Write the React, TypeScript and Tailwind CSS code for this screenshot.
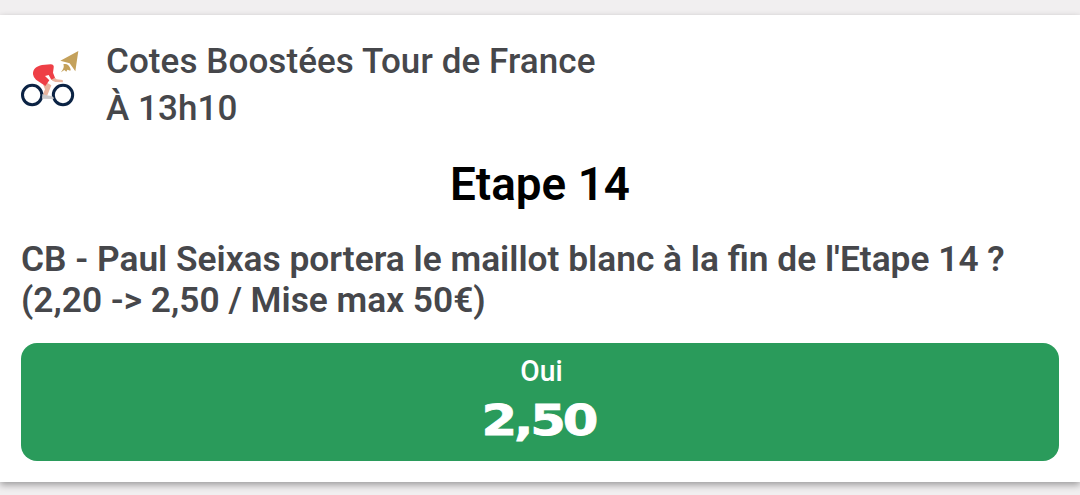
import React from 'react';

const market = {
	title: 'Cotes Boostées Tour de France',
	time: 'À 13h10',
	stage: 'Etape 14',
	question: ["CB - Paul Seixas portera le maillot blanc à la fin de l'Etape 14 ?", '(2,20 -> 2,50 / Mise max 50€)'],
	outcome: { label: 'Oui', odds: '2,50' },
};

const CyclingIcon: React.FC = () => (
	<svg viewBox="30 27 180 180" className="h-[60px] w-[60px] shrink-0" aria-hidden="true">
		{/* leg */}
		<path d="M107 126L124 136L118 151L111 169L97 168L105 148L100 136Z" fill="#e9b49f" />
		<g fill="none" stroke="#0b2344" strokeWidth="9">
			<circle cx="66.5" cy="165" r="29" />
			<circle cx="159" cy="165" r="29" />
		</g>
		{/* shoe */}
		<path d="M97 162L110 166L124 168Q132 170 131 177L96 176Z" fill="#c9c8ca" />
		{/* arm */}
		<path d="M122 114L133 112L140 118L158 120L159 127L136 126L127 122Z" fill="#e9b49f" />
		{/* jersey and shorts */}
		<path d="M69 103C68 87 80 78 96 75L122 73Q133 74 131 83L129 98L135 113L124 119L116 105L105 108L118 121L106 138L78 119Q70 112 69 103Z" fill="#ee3f46" />
		{/* gold arrow */}
		<path d="M205 33L151 62L179 70L196 94Z" fill="#c4a15b" />
		<path d="M160 73C168 69 178 74 182 88L181 92L172 89L169 95L163 90L153 97C158 90 164 82 160 73Z" fill="#c4a15b" />
	</svg>
);

const App: React.FC = () => {
	return (
		<div className="h-[495px] overflow-hidden bg-[#f1eff0] pt-[15px] font-['Roboto',sans-serif] font-medium">
			<section className="h-[467px] bg-white px-[21px] pt-[23px] text-[#46474b] shadow-[0_3px_7px_rgba(0,0,0,0.35)]">
				<header className="flex items-start gap-[26px]">
					<div className="-ml-px pt-[11px]">
						<CyclingIcon />
					</div>
					<div className="text-[35px] leading-[47px] tracking-[0.08px]">
						<p>{market.title}</p>
						<p>{market.time}</p>
					</div>
				</header>
				<h1 className="mt-[26px] text-center text-[45.8px] leading-[54px] font-semibold text-black">{market.stage}</h1>
				<div className="mt-[27px] text-[35.3px] leading-[41px] font-semibold whitespace-nowrap">
					{market.question.map((line) => (
						<p key={line}>{line}</p>
					))}
				</div>
				<button type="button" className="mt-[22px] flex h-[118px] w-full flex-col items-center rounded-[16px] bg-[#2a9b5b] pt-[11px] text-white">
					<span className="translate-x-px scale-x-[0.94] text-[30px] leading-[34px]">{market.outcome.label}</span>
					<span className="mt-[7px] -translate-x-[1.5px] scale-x-[1.19] font-['DejaVu_Sans',sans-serif] text-[43px] leading-[50px] font-bold tracking-[-2.6px] [-webkit-text-stroke:0.8px_white]">{market.outcome.odds}</span>
				</button>
			</section>
		</div>
	);
};

export default App;
